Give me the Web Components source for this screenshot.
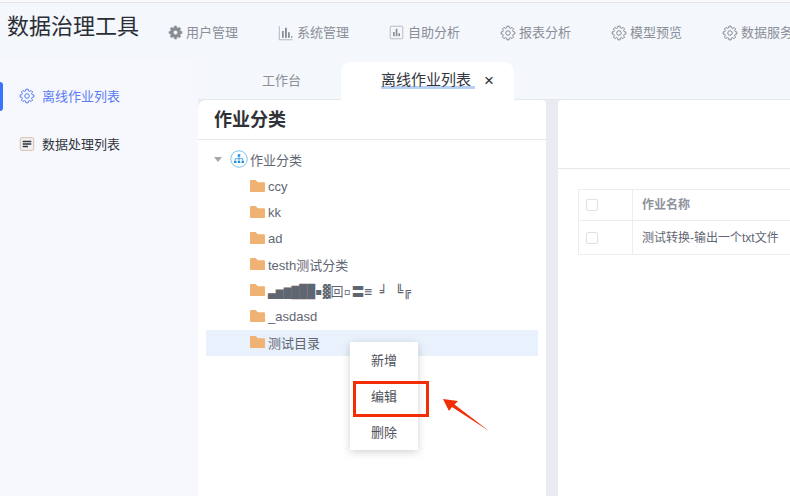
<!DOCTYPE html>
<html lang="zh">
<head>
<meta charset="utf-8">
<title>数据治理工具</title>
<style>
  html, body { margin: 0; height: 100%; overflow: hidden; }
  body { font-family: "Liberation Sans", "Noto Sans CJK SC", sans-serif; }
</style>
</head>
<body>
<app-shell></app-shell>

<script>
(function() {
  function cogPath() {
    let d = '';
    const n = 8;
    for (let i = 0; i < n; i++) {
      const a = (i / n) * Math.PI * 2 - Math.PI / 2;
      const s = Math.PI / n;
      const pts = [[a - s * 0.42, 10.4], [a + s * 0.42, 10.4], [a + s * 0.62, 8], [a + s * 1.38, 8]];
      pts.forEach((p, j) => {
        const x = (12 + p[1] * Math.cos(p[0])).toFixed(2);
        const y = (12 + p[1] * Math.sin(p[0])).toFixed(2);
        d += (i === 0 && j === 0 ? 'M' : 'L') + x + ' ' + y;
      });
    }
    return d + 'Z';
  }

  const icons = {
    cog: `<path d="${cogPath()}" fill="none" stroke="currentColor" stroke-width="1.5" stroke-linejoin="round"/><circle cx="12" cy="12" r="3.4" fill="none" stroke="currentColor" stroke-width="1.5"/>`,
    cogsolid: `<path fill-rule="evenodd" d="${cogPath()}M12 8.4a3.6 3.6 0 1 0 0 7.2a3.6 3.6 0 1 0 0-7.2Z" fill="currentColor" stroke="currentColor" stroke-width="1"/>`,
    bars: `<path d="M2 2v20h20" fill="none" stroke="currentColor" stroke-width="1.6" opacity=".55"/><path d="M6 19V9h2.6v10zM10.5 19V4h2.8v15zM15 19v-8h2.6v8zM19.4 19v-2h2.2v2z" fill="currentColor"/>`,
    boxbars: `<rect x="2" y="2" width="20" height="20" rx="1.5" fill="none" stroke="currentColor" stroke-width="1.4" opacity=".6"/><path d="M6.5 18v-7h2.6v7zM10.8 18V6h2.6v12zM15 18v-5h2.6v5z" fill="currentColor"/>`,
    list: `<rect x="2" y="2.5" width="20" height="19" rx="1.5" fill="#f1f1f1" stroke="#d9b9a8" stroke-width="1.4"/><path d="M5.5 7.2h13v2.2h-13zM5.5 11h13v2.2h-13zM5.5 14.8h8v2.2h-8z" fill="#2f3340"/>`,
    folder: `<path d="M0 2a1 1 0 0 1 1-1h5l2.4 2.6H15a1 1 0 0 1 1 1V13a1 1 0 0 1-1 1H1a1 1 0 0 1-1-1z" fill="#f0b273"/>`,
    org: `<circle cx="12" cy="12" r="11" fill="#fff" stroke="#6cbcec" stroke-width="1.2"/><path d="M10.3 5.8h3.4v3.2h-3.4zM5.4 14.2h3.2v3.2H5.4zM10.4 14.2h3.2v3.2h-3.2zM15.4 14.2h3.2v3.2h-3.2z" fill="#1f8fe0"/><path d="M12 9v5M7 14v-2.4h10V14" fill="none" stroke="#1f8fe0" stroke-width="1"/>`
  };

  class UiIcon extends HTMLElement {
    constructor() {
      super();
      const size = this.getAttribute('size') || 16;
      const h = this.getAttribute('height') || size;
      const box = this.getAttribute('name') === 'folder' ? '0 0 16 15' : '0 0 24 24';
      this.attachShadow({ mode: 'open' }).innerHTML = `
        <style>:host { display: block; flex: none; line-height: 0; } svg { display: block; overflow: visible; }</style>
        <svg width="${size}" height="${h}" viewBox="${box}">${icons[this.getAttribute('name')] || ''}</svg>`;
    }
  }
  customElements.define('ui-icon', UiIcon);

  class TopNav extends HTMLElement {
    constructor() {
      super();
      this.attachShadow({ mode: 'open' }).innerHTML = `
      <style>
        :host { display: flex; height: 58px; margin-top: 2px; box-sizing: border-box; border-top: 1px solid #e4e5e7; box-shadow: 0 -2px 0 #fafafa; padding: 0 0 0 7px; white-space: nowrap; overflow: hidden; }
        h1 { margin: 0 29px 0 0; padding-top: 8px; font-size: 22px; line-height: 32px; font-weight: 400; color: #2b2e36; }
        .items { display: flex; padding-top: 20px; }
        .item { display: flex; align-items: flex-start; gap: 3px; width: 111px; flex: none; font-size: 13px; line-height: 19px; color: #8a8f99; }
        ui-icon { width: 15px; margin: 2px 1px 0 -1px; color: #878b92; }
        .item:first-child ui-icon { margin: 2px 0 0; }
      </style>
      <h1>数据治理工具</h1>
      <div class="items">
        <div class="item"><ui-icon name="cogsolid" size="15"></ui-icon>用户管理</div>
        <div class="item"><ui-icon name="bars" size="16"></ui-icon>系统管理</div>
        <div class="item"><ui-icon name="boxbars" size="15"></ui-icon>自助分析</div>
        <div class="item"><ui-icon name="cog" size="16"></ui-icon>报表分析</div>
        <div class="item"><ui-icon name="cog" size="16"></ui-icon>模型预览</div>
        <div class="item"><ui-icon name="cog" size="16"></ui-icon>数据服务</div>
      </div>`;
    }
  }
  customElements.define('top-nav', TopNav);

  class SideMenu extends HTMLElement {
    constructor() {
      super();
      this.attachShadow({ mode: 'open' }).innerHTML = `
      <style>
        :host { display: block; width: 198px; flex: none; box-sizing: border-box; padding-top: 22px; background: #f6f8fd; }
        .row { position: relative; display: flex; align-items: center; gap: 7px; height: 29px; padding: 0 0 2px 19px; box-sizing: border-box; margin-bottom: 19px; font-size: 13px; color: #33363d; }
        .on { color: #5a7bf2; }
        .on::before { content: ""; position: absolute; left: 0; top: 0; bottom: 0; width: 3px; background: #3a73fa; border-radius: 0 4px 4px 0; }
        .row ui-icon { width: 16px; }
      </style>
      <div class="row on"><ui-icon name="cog" size="16"></ui-icon>离线作业列表</div>
      <div class="row"><ui-icon name="list" size="16"></ui-icon>数据处理列表</div>`;
    }
  }
  customElements.define('side-menu', SideMenu);

  class TabBar extends HTMLElement {
    constructor() {
      super();
      this.attachShadow({ mode: 'open' }).innerHTML = `
      <style>
        :host { display: flex; height: 39px; padding-top: 1px; box-sizing: border-box; border-bottom: 1px solid #e6e8ec; background: #f4f7fb; }
        .tab { display: flex; align-items: center; padding-bottom: 2px; }
        .plain { width: 143px; box-sizing: border-box; padding-left: 64px; font-size: 13px; color: #8d9097; }
        .active { width: 173px; box-sizing: border-box; padding-left: 40px; margin-bottom: -1px; background: #fff; border-radius: 10px 10px 0 0; font-size: 15px; color: #33363d; }
        .label { line-height: 18px; padding-right: 4px; box-shadow: inset 0 -3px 0 #b9d0f5; }
        .close { margin-left: 9px; font-size: 17px; line-height: 1; color: #2b2e36; }
      </style>
      <div class="tab plain">工作台</div>
      <div class="tab active"><span class="label">离线作业列表</span><span class="close">×</span></div>`;
    }
  }
  customElements.define('tab-bar', TabBar);

  class TreeRow extends HTMLElement {
    constructor() {
      super();
      this.attachShadow({ mode: 'open' }).innerHTML = `
      <style>
        :host { display: flex; align-items: center; gap: 3px; height: 26px; box-sizing: border-box; padding: 0 0 2px 44px; font-size: 13px; color: #5f6672; white-space: nowrap; }
        :host([selected]) { background: #e9f1fc; }
      </style>
      <ui-icon name="folder" size="15" height="14"></ui-icon><slot></slot>`;
    }
  }
  customElements.define('tree-row', TreeRow);

  class ContextMenu extends HTMLElement {
    constructor() {
      super();
      this.attachShadow({ mode: 'open' }).innerHTML = `
      <style>
        :host { position: absolute; left: 152px; top: 242px; width: 68px; background: #fff; box-shadow: 0 2px 8px rgba(0,0,0,.18); font-size: 13px; color: #4d5159; }
        div { height: 36px; line-height: 38px; text-align: center; }
      </style>
      <div>新增</div><div>编辑</div><div>删除</div>`;
    }
  }
  customElements.define('context-menu', ContextMenu);

  class TreePanel extends HTMLElement {
    constructor() {
      super();
      this.attachShadow({ mode: 'open' }).innerHTML = `
      <style>
        :host { position: relative; display: block; width: 348px; flex: none; background: #fff; border-radius: 8px 4px 0 0; }
        h2 { margin: 0; height: 40px; box-sizing: border-box; padding: 7px 0 0 16px; font-size: 18px; line-height: 26px; font-weight: 700; color: #2f3238; border-bottom: 1px solid #e6e8ec; }
        .tree { padding: 6px 8px 0; }
        .root { display: flex; align-items: center; height: 28px; box-sizing: border-box; padding: 0 0 2px 8px; font-size: 13px; color: #5f6672; }
        .caret { width: 0; height: 0; border: 4px solid transparent; border-top: 5px solid #a4a7ad; border-bottom: 0; margin-right: 8px; }
        .root ui-icon { margin-right: 2px; }
        .junk { font-family: "DejaVu Sans Mono", "Noto Sans CJK SC", monospace; }
      </style>
      <h2>作业分类</h2>
      <div class="tree">
        <div class="root"><span class="caret"></span><ui-icon name="org" size="18"></ui-icon>作业分类</div>
        <tree-row>ccy</tree-row>
        <tree-row>kk</tree-row>
        <tree-row>ad</tree-row>
        <tree-row>testh测试分类</tree-row>
        <tree-row><span class="junk">▃▅▆▇██▪▓回▫〓≡ ╛ ╚╔</span></tree-row>
        <tree-row>_asdasd</tree-row>
        <tree-row selected>测试目录</tree-row>
      </div>
      <context-menu></context-menu>`;
    }
  }
  customElements.define('tree-panel', TreePanel);

  class JobTable extends HTMLElement {
    constructor() {
      super();
      this.attachShadow({ mode: 'open' }).innerHTML = `
      <style>
        :host { display: block; flex: 1; min-width: 0; overflow: hidden; background: #fff; border-radius: 4px 0 0 0; }
        .search { height: 68px; border-bottom: 1px solid #e6e8ec; }
        .wrap { padding: 20px 0 0 20px; }
        .grid { display: grid; width: 400px; grid-template-columns: 54px 1fr; grid-template-rows: 31px 33px; border: 1px solid #ebedf3; font-size: 12px; color: #5f6672; }
        .cell { display: flex; align-items: center; padding-left: 9px; white-space: nowrap; }
        .cell:nth-child(odd) { border-right: 1px solid #ebedf3; }
        .line { border-bottom: 1px solid #ebedf3; }
        .grid .cell:nth-last-child(-n+2) { border-bottom: 0; }
        .head { font-weight: 700; color: #8d929c; }
        .t { margin-top: -3px; }
        .box { width: 10px; height: 10px; border: 1px solid #dfe1e6; border-radius: 2px; margin-left: -2px; }
      </style>
      <div class="search"></div>
      <div class="wrap">
        <div class="grid">
          <div class="cell line"><span class="box"></span></div>
          <div class="cell line head"><span class="t">作业名称</span></div>
          <div class="cell line"><span class="box"></span></div>
          <div class="cell line"><span class="t">测试转换-输出一个txt文件</span></div>
        </div>
      </div>`;
    }
  }
  customElements.define('job-table', JobTable);

  class CallOut extends HTMLElement {
    constructor() {
      super();
      this.attachShadow({ mode: 'open' }).innerHTML = `
      <style>
        :host { position: absolute; left: 353px; top: 381px; width: 140px; height: 56px; pointer-events: none; }
        .frame { width: 76px; height: 36px; box-sizing: border-box; border: 3px solid #f32d05; }
        svg { position: absolute; left: 86px; top: 14px; }
      </style>
      <div class="frame"></div>
      <svg width="54" height="40" viewBox="0 0 54 40"><path d="M4 4 L19 6 L15.5 9.5 L50 36 L13 12 L10 16 Z" fill="#f32d05"/></svg>`;
    }
  }
  customElements.define('call-out', CallOut);

  class AppShell extends HTMLElement {
    constructor() {
      super();
      this.attachShadow({ mode: 'open' }).innerHTML = `
      <style>
        :host { display: flex; flex-direction: column; position: relative; width: 790px; height: 496px; overflow: hidden; background: #f4f7fb; }
        .body { display: flex; flex: 1; min-height: 0; }
        .main { flex: 1; min-width: 0; display: flex; flex-direction: column; margin-top: 1px; }
        .panels { flex: 1; display: flex; gap: 12px; background: #e8ebef; min-height: 0; }
      </style>
      <top-nav></top-nav>
      <div class="body">
        <side-menu></side-menu>
        <div class="main">
          <tab-bar></tab-bar>
          <div class="panels">
            <tree-panel></tree-panel>
            <job-table></job-table>
          </div>
        </div>
      </div>
      <call-out></call-out>`;
    }
  }
  customElements.define('app-shell', AppShell);
})();
</script>
</body>
</html>
